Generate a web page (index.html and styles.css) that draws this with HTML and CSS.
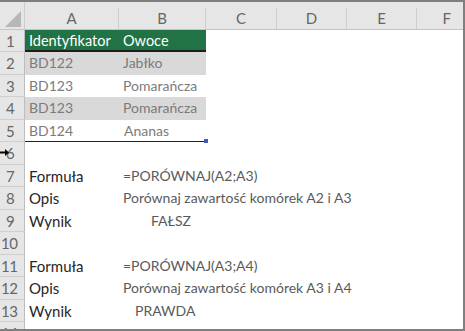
FILE: index.html
```html
<!DOCTYPE html>
<html lang="pl">
<head>
<meta charset="utf-8">
<title>PORÓWNAJ</title>
<link rel="stylesheet" href="styles.css">
</head>
<body>
<div class="sheet">
  <div class="colheads">
    <div class="corner"><span class="tri"></span></div>
    <div class="ch ca">A</div>
    <div class="ch cb">B</div>
    <div class="ch cc">C</div>
    <div class="ch cd">D</div>
    <div class="ch ce">E</div>
    <div class="ch cf">F</div>
  </div>
  <div class="row"><div class="rh">1</div><div class="cell a head">Identyfikator</div><div class="cell b head">Owoce</div></div>
  <div class="row"><div class="rh">2</div><div class="cell a data shade">BD122</div><div class="cell b data shade">Jabłko</div></div>
  <div class="row"><div class="rh">3</div><div class="cell a data">BD123</div><div class="cell b data">Pomarańcza</div></div>
  <div class="row"><div class="rh">4</div><div class="cell a data shade">BD123</div><div class="cell b data shade">Pomarańcza</div></div>
  <div class="row"><div class="rh">5</div><div class="cell a data last">BD124</div><div class="cell b data last"><span class="ind1">Ananas</span><span class="handle"></span></div></div>
  <div class="row"><div class="rh">6</div></div>
  <div class="row"><div class="rh">7</div><div class="cell a label">Formuła</div><div class="cell wide val">=PORÓWNAJ(A2;A3)</div></div>
  <div class="row"><div class="rh">8</div><div class="cell a label">Opis</div><div class="cell wide val">Porównaj zawartość komórek A2 i A3</div></div>
  <div class="row"><div class="rh">9</div><div class="cell a label">Wynik</div><div class="cell wide val"><span class="ind3">FAŁSZ</span></div></div>
  <div class="row"><div class="rh">10</div></div>
  <div class="row"><div class="rh">11</div><div class="cell a label">Formuła</div><div class="cell wide val">=PORÓWNAJ(A3;A4)</div></div>
  <div class="row"><div class="rh">12</div><div class="cell a label">Opis</div><div class="cell wide val">Porównaj zawartość komórek A3 i A4</div></div>
  <div class="row"><div class="rh">13</div><div class="cell a label">Wynik</div><div class="cell wide val"><span class="ind2">PRAWDA</span></div></div>
  <div class="row"><div class="rh">14</div></div>
  <svg class="cursor" width="10" height="9" viewBox="0 0 10 9"><path d="M0 3.5H5V1L9 4.5L5 8V5.5H0Z" fill="#000"/></svg>
</div>
</body>
</html>
```
FILE: styles.css
```css
html, body {
  margin: 0;
  padding: 0;
  background: #fff;
}
body {
  width: 465px;
  height: 331px;
  overflow: hidden;
  font-family: "Lato", "Open Sans", sans-serif;
}
.sheet {
  position: relative;
  box-sizing: border-box;
  width: 465px;
  height: 331px;
  border-top: 2px solid #7f7f7f;
  border-right: 2px solid #7f7f7f;
  border-bottom: 2px solid #7f7f7f;
  overflow: hidden;
  background: #fff;
}
.colheads {
  display: flex;
  height: 28px;
  background: #e6e6e6;
  border-bottom: 1px solid #c4c4c4;
  box-sizing: border-box;
}
.corner {
  position: relative;
  width: 25px;
  flex: none;
  box-sizing: border-box;
  border-right: 1px solid #cdcdcd;
}
.tri {
  position: absolute;
  right: 3px;
  bottom: 2px;
  width: 0;
  height: 0;
  border-left: 16px solid transparent;
  border-bottom: 16px solid #b7b7b7;
}
.ch {
  flex: none;
  box-sizing: border-box;
  border-right: 1px solid #cdcdcd;
  text-align: center;
  font-size: 15px;
  color: #666;
  margin-top: 6px;
  line-height: 20px;
  height: 21px;
}
.ca { width: 94px; }
.cb { width: 87px; }
.cc { width: 71px; }
.cd { width: 70px; }
.ce { width: 70px; }
.cf { flex: 1; border-right: 0; text-align: right; padding-right: 12px; }
.row {
  display: flex;
  height: 22px;
}
.row:nth-child(odd) { height: 23px; }
.rh {
  flex: none;
  width: 25px;
  box-sizing: border-box;
  background: #e6e6e6;
  border-right: 1px solid #bdbdbd;
  border-bottom: 1px solid #cfcfcf;
  color: #666;
  font-size: 15px;
  line-height: 22px;
  text-align: left;
  padding-left: 6px;
}
.row:nth-child(n+11) .rh { padding-left: 1px; letter-spacing: -0.5px; }
.cell {
  position: relative;
  flex: none;
  box-sizing: border-box;
  font-size: 14px;
  line-height: 22px;
  white-space: nowrap;
  padding-left: 4px;
}
.a { width: 94px; }
.b { width: 87px; }
.wide { flex: 1; }
.head {
  background: #217346;
  color: #fff;
  border-bottom: 2px solid #1d1d1d;
  line-height: 21px;
  font-size: 14.5px;
}
.data { color: #7b7b7b; }
.shade { background: #d9d9d9; }
.last { border-bottom: 1px solid #222; }
.ind1 { padding-left: 1px; }
.ind2 { padding-left: 12px; }
.ind3 { padding-left: 28px; }
.handle {
  position: absolute;
  right: -2px;
  bottom: -2px;
  width: 4px;
  height: 4px;
  background: #3f5bbf;
}
.label { color: #262626; font-size: 15px; }
.val { color: #5a5a5a; }
.cursor {
  position: absolute;
  left: 0;
  top: 146px;
}
```
